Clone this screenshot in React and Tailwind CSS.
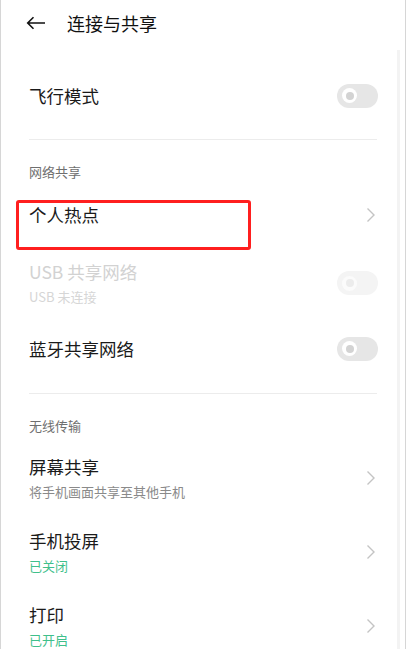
import React from 'react';

const font = { fontFamily: '"Noto Sans CJK SC", "Noto Sans", sans-serif' };

function Toggle({ faded }) {
  return (
    <div className={`w-[41px] h-[24px] rounded-full flex items-center pl-[5px] ${faded ? 'bg-[#f4f4f4]' : 'bg-[#e6e6e6]'}`}>
      <div className={`w-[15px] h-[15px] rounded-full flex items-center justify-center ${faded ? 'bg-[#fbfbfb]' : 'bg-white'}`}>
        <div className={`w-[8px] h-[8px] rounded-full ${faded ? 'bg-[#ececec]' : 'bg-[#d3d3d3]'}`} />
      </div>
    </div>
  );
}

function Chevron() {
  return (
    <svg width="10" height="16" viewBox="0 0 10 16" className="mr-[1px]">
      <path d="M1.5 1.5 L8 8 L1.5 14.5" fill="none" stroke="#c4c4c4" strokeWidth="1.4" />
    </svg>
  );
}

function SectionTitle({ children, className }) {
  return (
    <div className={`px-[28px] pt-[23px] text-[13px] leading-[18px] text-[#6f6f6f] ${className}`}>{children}</div>
  );
}

function LinkRow({ title, sub, subColor }) {
  return (
    <div className="h-[74px] px-[28px] flex items-center justify-between">
      <div className="flex flex-col gap-[4px]">
        <div className="text-[17.5px] leading-[24px] text-[#1a1a1a]">{title}</div>
        <div className={`text-[13px] leading-[18px] ${subColor}`}>{sub}</div>
      </div>
      <Chevron />
    </div>
  );
}

export default function App() {
  return (
    <div style={font} className="relative w-[406px] h-[649px] overflow-hidden bg-white border-l border-r border-[#d6d6d6]">
      {/* header */}
      <div className="h-[46px] flex items-center pl-[25px]">
        <svg width="20" height="14" viewBox="0 0 20 14">
          <path d="M19 7 H2 M7.5 1.2 L1.7 7 L7.5 12.8" fill="none" stroke="#111" strokeWidth="1.6" />
        </svg>
        <div className="ml-[21px] text-[18px] leading-[24px] text-[#111]">连接与共享</div>
      </div>

      {/* 飞行模式 */}
      <div className="mx-[28px] h-[94px] pt-[6px] flex items-center justify-between border-b border-[#ececec]">
        <div className="text-[17.5px] leading-[24px] text-[#1a1a1a]">飞行模式</div>
        <div className="-mr-[1px]"><Toggle /></div>
      </div>

      <SectionTitle className="h-[50px]">网络共享</SectionTitle>

      {/* 个人热点 */}
      <div className="h-[50px] px-[28px] flex items-center justify-between">
        <div className="text-[17.5px] leading-[24px] text-[#1a1a1a] -mt-[1px]">个人热点</div>
        <Chevron />
      </div>

      {/* USB */}
      <div className="h-[86px] px-[28px] flex items-center justify-between">
        <div className="flex flex-col gap-[4px]">
          <div className="text-[17.5px] leading-[24px] text-[#d2d2d2]">USB 共享网络</div>
          <div className="text-[13px] leading-[18px] text-[#d6d6d6]">USB 未连接</div>
        </div>
        <div className="-mr-[1px]"><Toggle faded /></div>
      </div>

      {/* 蓝牙 */}
      <div className="mx-[28px] h-[68px] pb-[22px] flex items-center justify-between border-b border-[#ececec]">
        <div className="text-[17.5px] leading-[24px] text-[#1a1a1a]">蓝牙共享网络</div>
        <div className="-mr-[1px]"><Toggle /></div>
      </div>

      <SectionTitle className="h-[47px]">无线传输</SectionTitle>

      <LinkRow title="屏幕共享" sub="将手机画面共享至其他手机" subColor="text-[#8a8a8a]" />
      <LinkRow title="手机投屏" sub="已关闭" subColor="text-[#3fc08b]" />
      <LinkRow title="打印" sub="已开启" subColor="text-[#3fc08b]" />

      {/* faint scrollbar */}
      <div className="absolute left-[396px] top-[50px] bottom-0 w-[3px] bg-[#f3f3f3]" />

      {/* red annotation box */}
      <div className="absolute left-[15px] top-[200px] w-[235px] h-[50px] border-[3px] border-[#ff1f1f] rounded-[3px]" />
    </div>
  );
}
